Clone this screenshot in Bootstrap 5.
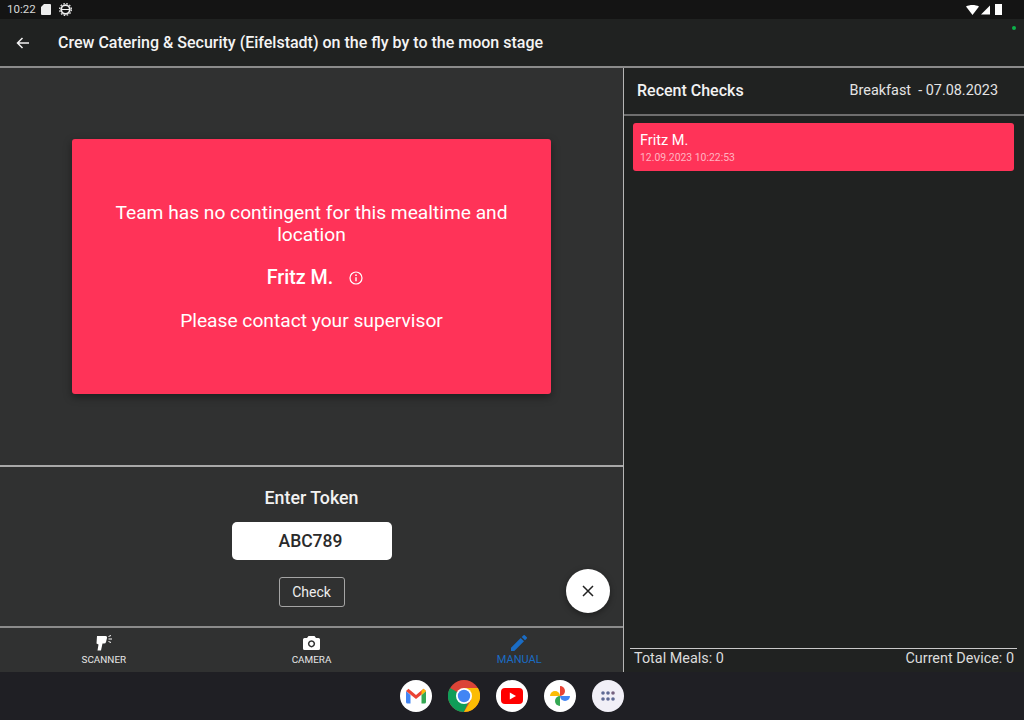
<!DOCTYPE html>
<html lang="en">
<head>
<meta charset="utf-8"/>
<title>Crew Catering</title>
<link href="https://cdn.jsdelivr.net/npm/bootstrap@5.3.0/dist/css/bootstrap.min.css" rel="stylesheet"/>
<style>
  html, body { height: 100%; }
  body { width: 1024px; height: 720px; overflow: hidden; background: #202221; color: #f2f2f2; font-family: Roboto, "Liberation Sans", sans-serif; }
  .status-bar { height: 19px; background: #141414; padding: 0 22px 0 7px; font-size: 11.5px; color: #d8d8d8; }
  .status-gap { gap: 2px; }
  .app-bar { height: 47px; background: #202221; padding-left: 15px; position: relative; }
  .app-title { font-size: 16px; font-weight: 500; margin-left: 27px; color: #f4f4f4; }
  .rec-dot { position: absolute; right: 8px; top: 7px; width: 4px; height: 4px; border-radius: 50%; background: #0bb14a; }
  .main-area { height: 606px; border-top: 2px solid #8b8b8b; }
  .left-pane { width: 623px; background: #303131; position: relative; }
  .right-pane { width: 401px; background: #202221; border-left: 1px solid #b5b5b5; }
  .msg-area { height: 398px; padding-left: 72px; padding-top: 71px; }
  .msg-card { width: 479px; height: 255px; background: #ff3358; border-radius: 3px; box-shadow: 0 3px 8px rgba(0,0,0,.4); color: #fff; font-size: 19.2px; line-height: 22px; text-align: center; padding: 0 30px; }
  .msg-gap { margin-bottom: 21px; }
  .msg-name { font-size: 19.7px; font-weight: 500; padding-left: 7px; }
  .token-area { height: 161px; border-top: 2px solid #a8a8a8; padding-top: 20px; }
  .token-label { font-size: 17.8px; font-weight: 500; line-height: 22px; }
  .token-input { width: 160px; height: 38px; background: #fff; color: #2a2a2a; border: 0; border-radius: 5px; font-size: 17.5px; line-height: 38px; font-weight: 500; text-align: center; margin-top: 13px; padding-right: 2px; }
  .check-btn { width: 66px; height: 30px; margin-top: 17px; border: 1px solid #a5a5a5; border-radius: 3px; background: transparent; color: #eee; font-size: 14px; padding: 0; --bs-btn-hover-color: #eee; }
  .fab { position: absolute; left: 566px; top: 501px; width: 44px; height: 44px; border-radius: 50%; background: #fff; box-shadow: 0 2px 6px rgba(0,0,0,.4); }
  .tab-bar { height: 46px; border-top: 2px solid #8b8b8b; }
  .tab-item { width: 208px; font-size: 9.9px; color: #e6e6e6; line-height: 11px; padding-top: 7px; }
  .tab-item.active-tab { color: #1a6cc4; font-size: 11px; }
  .tab-item svg { display: block; margin-bottom: 3px; }
  .recent-head { height: 48px; border-bottom: 2px solid #6e6e6e; padding: 0 26px 0 13px; }
  .recent-title { font-size: 16px; font-weight: 500; }
  .recent-meal { font-size: 14.4px; color: #e4e4e4; white-space: pre; }
  .check-item { margin: 7px 10px 0 9px; height: 48px; background: #ff3358; border-radius: 3px; padding: 9px 7px 0; color: #fff; font-size: 14.5px; line-height: 17px; }
  .check-time { font-size: 10.4px; line-height: 12px; color: #ffb3c1; margin-top: 3px; }
  .recent-list { height: 532px; }
  .totals { margin: 0 7px 0 6px; border-top: 1px solid #c9c9c9; font-size: 14.4px; color: #dcdcdc; padding: 1px 3px 0 4px; line-height: 17px; flex: 1; }
  .dock { height: 48px; background: #1f1f24; gap: 16px; }
  .dock-icon { width: 32px; height: 32px; border-radius: 50%; background: #fff; }
  .dock-icon.apps-icon { background: #f1eff7; }
</style>
</head>
<body>
<div class="status-bar d-flex align-items-center">
  <span>10:22</span>
  <svg style="margin-left:5px" width="10" height="11" viewBox="0 0 10 11"><path d="M3 0H9a1 1 0 0 1 1 1V10a1 1 0 0 1-1 1H1a1 1 0 0 1-1-1V3z" fill="#eee"/></svg>
  <svg style="margin-left:8px" width="13" height="13" viewBox="0 0 13 13"><circle cx="6.500" cy="6.500" r="4.300" fill="none" stroke="#eee" stroke-width="1.800"/><circle cx="6.500" cy="6.500" r="5.900" fill="none" stroke="#eee" stroke-width="1.200" stroke-dasharray="1.600 1.500"/><path d="M2.500 6.500h8" stroke="#eee" stroke-width="1"/></svg>
  <span class="ms-auto d-flex align-items-center status-gap">
    <svg width="13" height="10" viewBox="0 0 13 10"><path d="M0 1.500C3.500-.5 9.500-.5 13 1.500L6.500 10z" fill="#fff"/></svg>
    <svg width="9" height="10" viewBox="0 0 10 10"><path d="M10 0V10H0z" fill="#fff"/></svg>
    <svg style="margin-left:3px" width="7" height="11" viewBox="0 0 7 11"><rect width="7" height="11" fill="#fff"/></svg>
  </span>
</div>
<div class="app-bar d-flex align-items-center">
  <svg width="16" height="16" viewBox="0 0 16 16"><path d="M14 8H2.500M7.500 3 2.500 8l5 5" fill="none" stroke="#f2f2f2" stroke-width="1.500"/></svg>
  <span class="app-title">Crew Catering &amp; Security (Eifelstadt) on the fly by to the moon stage</span>
  <span class="rec-dot"></span>
</div>
<div class="main-area d-flex">
  <div class="left-pane d-flex flex-column">
    <div class="msg-area">
      <div class="msg-card d-flex flex-column justify-content-center">
        <div class="msg-gap">Team has no contingent for this mealtime and location</div>
        <div class="msg-name d-flex justify-content-center align-items-center msg-gap">
          <span>Fritz M.</span>
          <svg class="ms-3" width="14" height="14" viewBox="0 0 14 14"><circle cx="7" cy="7" r="6" fill="none" stroke="#fff" stroke-width="1.200"/><path d="M7 6.200v4" stroke="#fff" stroke-width="1.400"/><circle cx="7" cy="4.200" r=".9" fill="#fff"/></svg>
        </div>
        <div>Please contact your supervisor</div>
      </div>
    </div>
    <div class="token-area d-flex flex-column align-items-center">
      <div class="token-label">Enter Token</div>
      <div class="token-input">ABC789</div>
      <button class="btn check-btn" type="button">Check</button>
    </div>
    <div class="fab d-flex align-items-center justify-content-center">
      <svg width="12" height="12" viewBox="0 0 12 12"><path d="M1 1 11 11M11 1 1 11" stroke="#222" stroke-width="1.500"/></svg>
    </div>
    <div class="tab-bar d-flex">
      <div class="tab-item d-flex flex-column align-items-center">
        <svg width="18" height="16" viewBox="0 0 18 16"><path d="M2 1H10.500Q12.500 1 12 3L11 7Q10.800 8.500 9 8.500H7.500L6 15.500H2.500L3.500 9.500 1.500 8.500z" fill="#fff"/><path d="M13.500 1.500 16 .5M13.500 4H17M13.500 6.500 16 7.500" stroke="#fff" stroke-width="1"/></svg>
        SCANNER
      </div>
      <div class="tab-item d-flex flex-column align-items-center">
        <svg width="17" height="16" viewBox="0 0 17 16"><path fill-rule="evenodd" d="M5.500 1H11.500L13 3H15.500A1.500 1.500 0 0 1 17 4.500V13.500A1.500 1.500 0 0 1 15.500 15H1.500A1.500 1.500 0 0 1 0 13.500V4.500A1.500 1.500 0 0 1 1.500 3H4ZM8.500 5.200a3.600 3.600 0 1 0 .01 0ZM8.500 6.700a2.100 2.100 0 1 1-.01 0Z" fill="#fff"/></svg>
        CAMERA
      </div>
      <div class="tab-item active-tab d-flex flex-column align-items-center">
        <svg width="16" height="16" viewBox="0 0 16 16"><path d="M0 16V12.700L9.700 3 13 6.300 3.300 16ZM10.700 2 12.300.4A1.200 1.200 0 0 1 14 .4L15.600 2A1.200 1.200 0 0 1 15.600 3.700L14 5.300Z" fill="#1a6cc4"/></svg>
        MANUAL
      </div>
    </div>
  </div>
  <div class="right-pane d-flex flex-column">
    <div class="recent-head d-flex align-items-center justify-content-between">
      <span class="recent-title">Recent Checks</span>
      <span class="recent-meal">Breakfast  - 07.08.2023</span>
    </div>
    <div class="recent-list">
      <div class="check-item">
        <div>Fritz M.</div>
        <div class="check-time">12.09.2023 10:22:53</div>
      </div>
    </div>
    <div class="totals d-flex justify-content-between">
      <span>Total Meals: 0</span>
      <span>Current Device: 0</span>
    </div>
  </div>
</div>
<div class="dock d-flex align-items-center justify-content-center">
  <div class="dock-icon d-flex align-items-center justify-content-center">
    <svg width="20" height="16" viewBox="0 0 20 16"><path d="M0 3V14a1.500 1.500 0 0 0 1.500 1.500H4.500V7z" fill="#4285f4"/><path d="M20 3V14a1.500 1.500 0 0 1-1.500 1.500H15.500V7z" fill="#34a853"/><path d="M0 3 2.500.8 10 7 17.500.8 20 3 10 11z" fill="#ea4335"/><path d="M15.500 3 17.500.8 20 3 15.500 7z" fill="#fbbc04"/></svg>
  </div>
  <svg width="32" height="32" viewBox="0 0 32 32"><circle cx="16" cy="16" r="16" fill="#db4437"/><path d="M16 16 2.100 8A16 16 0 0 0 16 32l7-16z" fill="#0f9d58"/><path d="M16 8H29.900A16 16 0 0 1 16 32l7-12z" fill="#fbbc04"/><circle cx="16" cy="16" r="8" fill="#fff"/><circle cx="16" cy="16" r="6.200" fill="#4285f4"/></svg>
  <div class="dock-icon d-flex align-items-center justify-content-center">
    <svg width="22" height="16" viewBox="0 0 22 16"><rect width="22" height="16" rx="4" fill="#f00"/><path d="M8.800 4.500 15 8l-6.200 3.500z" fill="#fff"/></svg>
  </div>
  <div class="dock-icon d-flex align-items-center justify-content-center">
    <svg width="24" height="24" viewBox="0 0 24 24"><path d="M12 12V2a5 5 0 0 1 0 10z" fill="#ea4335"/><path d="M12 12H22a5 5 0 0 1-10 0z" fill="#4285f4"/><path d="M12 12V22a5 5 0 0 1 0-10z" fill="#34a853"/><path d="M12 12H2a5 5 0 0 1 10 0z" fill="#fbbc04"/></svg>
  </div>
  <div class="dock-icon apps-icon d-flex align-items-center justify-content-center">
    <svg width="14" height="10" viewBox="0 0 14 10"><g fill="#5f6a94"><circle cx="2" cy="2" r="1.800"/><circle cx="7" cy="2" r="1.800"/><circle cx="12" cy="2" r="1.800" fill="#75617f"/><circle cx="2" cy="8" r="1.800"/><circle cx="7" cy="8" r="1.800"/><circle cx="12" cy="8" r="1.800"/></g></svg>
  </div>
</div>
<script src="https://cdn.jsdelivr.net/npm/bootstrap@5.3.0/dist/js/bootstrap.bundle.min.js"></script>
</body>
</html>
